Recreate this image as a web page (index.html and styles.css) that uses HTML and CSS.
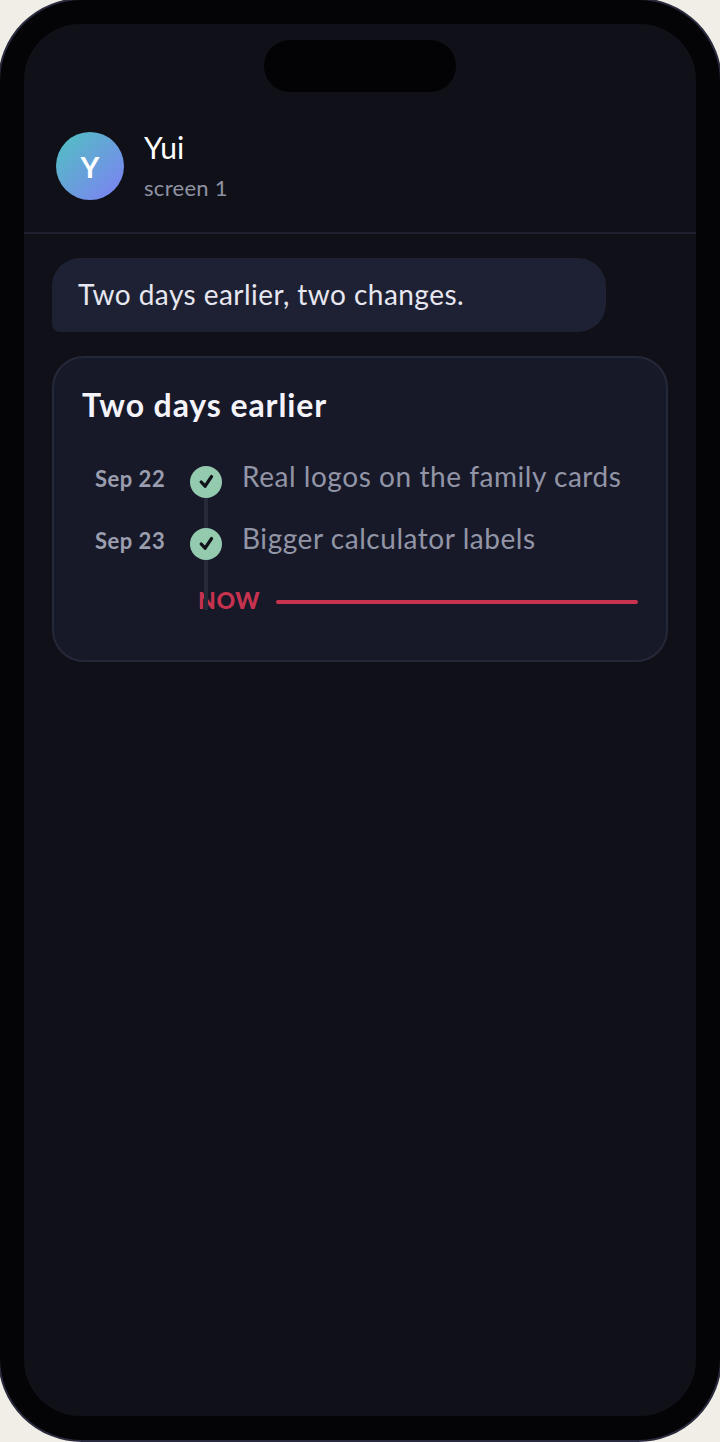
FILE: index.html
```html
<!DOCTYPE html>
<html lang="en">
<head>
    <meta charset="UTF-8">
    <title>Yui - screen 1</title>
    <link rel="stylesheet" href="styles.css">
</head>
<body>
  <div class="phone">
    <div class="screen">
      <div class="island"></div>

      <header class="chat-header">
        <div class="avatar">Y</div>
        <div class="who">
          <div class="name">Yui</div>
          <div class="sub">screen 1</div>
        </div>
      </header>

      <main class="chat">
        <div class="bubble">Two days earlier, two changes.</div>

        <section class="card">
          <h2 class="card-title">Two days earlier</h2>
          <div class="timeline">
            <div class="row">
              <span class="date">Sep 22</span>
              <span class="dot">
                <svg viewBox="0 0 32 32" width="32" height="32"><path d="M11.2 16l3.9 4.2 6.4-9.6" fill="none" stroke="#10121a" stroke-width="3.3" stroke-linecap="round" stroke-linejoin="round"/></svg>
              </span>
              <span class="what">Real logos on the family cards</span>
            </div>
            <div class="row">
              <span class="date">Sep 23</span>
              <span class="dot">
                <svg viewBox="0 0 32 32" width="32" height="32"><path d="M11.2 16l3.9 4.2 6.4-9.6" fill="none" stroke="#10121a" stroke-width="3.3" stroke-linecap="round" stroke-linejoin="round"/></svg>
              </span>
              <span class="what">Bigger calculator labels</span>
            </div>
            <div class="now">
              <span class="now-label">NOW</span>
              <span class="now-line"></span>
            </div>
            <div class="rail"></div>
          </div>
        </section>
      </main>
    </div>
  </div>
</body>
</html>
```

FILE: styles.css
```css
* {
  box-sizing: border-box;
}

body {
  margin: 0;
  overflow: hidden;
  background-color: #f1eee7;
  font-family: Lato, "Noto Sans", sans-serif;
  color: #fff;
}

/* frame is a little wider than the window, side borders get cut off */
.phone {
  width: 724px;
  height: 1444px;
  margin: -2px -2px 0;
  padding: 24px;
  background-color: #040407;
  border: 2px solid #2b2b40;
  border-radius: 84px;
}

.screen {
  position: relative;
  height: 100%;
  background-color: #101118;
  border-radius: 56px;
  overflow: hidden;
}

.island {
  position: absolute;
  top: 16px;
  left: 240px;
  width: 192px;
  height: 52px;
  background-color: #030305;
  border-radius: 26px;
}

.chat-header {
  display: flex;
  align-items: center;
  gap: 20px;
  height: 210px;
  padding: 108px 32px 32px;
  border-bottom: 2px solid #1f2130;
}

.avatar {
  display: flex;
  align-items: center;
  justify-content: center;
  width: 68px;
  height: 68px;
  border-radius: 50%;
  background: linear-gradient(135deg, #4fc3c0, #7f7ff5);
  font-size: 29px;
  font-weight: 700;
}

.name {
  font-size: 30px;
  line-height: 34px;
}

.sub {
  margin-top: 10px;
  font-size: 22px;
  line-height: 28px;
  letter-spacing: 0.3px;
  color: #8f92a3;
}

.chat {
  padding: 24px 28px;
}

.bubble {
  width: 554px;
  height: 74px;
  padding: 0 26px;
  background-color: #1e2133;
  border-radius: 28px 28px 28px 8px;
  font-size: 28px;
  line-height: 72px;
  letter-spacing: 0.45px;
  color: #e6e7f0;
}

.card {
  width: 616px;
  height: 306px;
  margin-top: 24px;
  padding: 26px 28px;
  background-color: #171929;
  border: 2px solid #252838;
  border-radius: 32px;
}

.card-title {
  margin: 0;
  font-size: 32px;
  line-height: 42px;
  font-weight: 700;
  letter-spacing: 0.9px;
  color: #f4f3fa;
}

.timeline {
  position: relative;
  margin-top: 40px;
}

.row {
  display: flex;
  align-items: flex-start;
  height: 62px;
}

.date {
  width: 83px;
  margin-left: 13px;
  margin-top: -1px;
  font-size: 22px;
  line-height: 28px;
  font-weight: 700;
  letter-spacing: 0.5px;
  white-space: nowrap;
  color: #9b9eae;
}

.dot {
  position: relative;
  z-index: 1;
  width: 32px;
  height: 32px;
  margin-left: 12px;
  border-radius: 50%;
  background-color: #94caae;
}

.dot svg {
  display: block;
}

.what {
  margin-left: 20px;
  margin-top: -5px;
  font-size: 28px;
  line-height: 30px;
  letter-spacing: 0.55px;
  white-space: nowrap;
  color: #9295a6;
}

.now {
  display: flex;
  align-items: center;
  margin-top: 1px;
  padding-left: 116px;
}

.now-label {
  width: 78px;
  margin-top: -5px;
  font-size: 23px;
  line-height: 28px;
  font-weight: 900;
  letter-spacing: 0.6px;
  color: #c7324e;
}

.now-line {
  width: 362px;
  height: 4px;
  margin-top: -2px;
  border-radius: 2px;
  background-color: #c7324e;
}

/* rail sits over the N of NOW, same as the reference */
.rail {
  position: absolute;
  top: 32px;
  left: 122px;
  width: 4px;
  height: 112px;
  background-color: #262938;
}
```
